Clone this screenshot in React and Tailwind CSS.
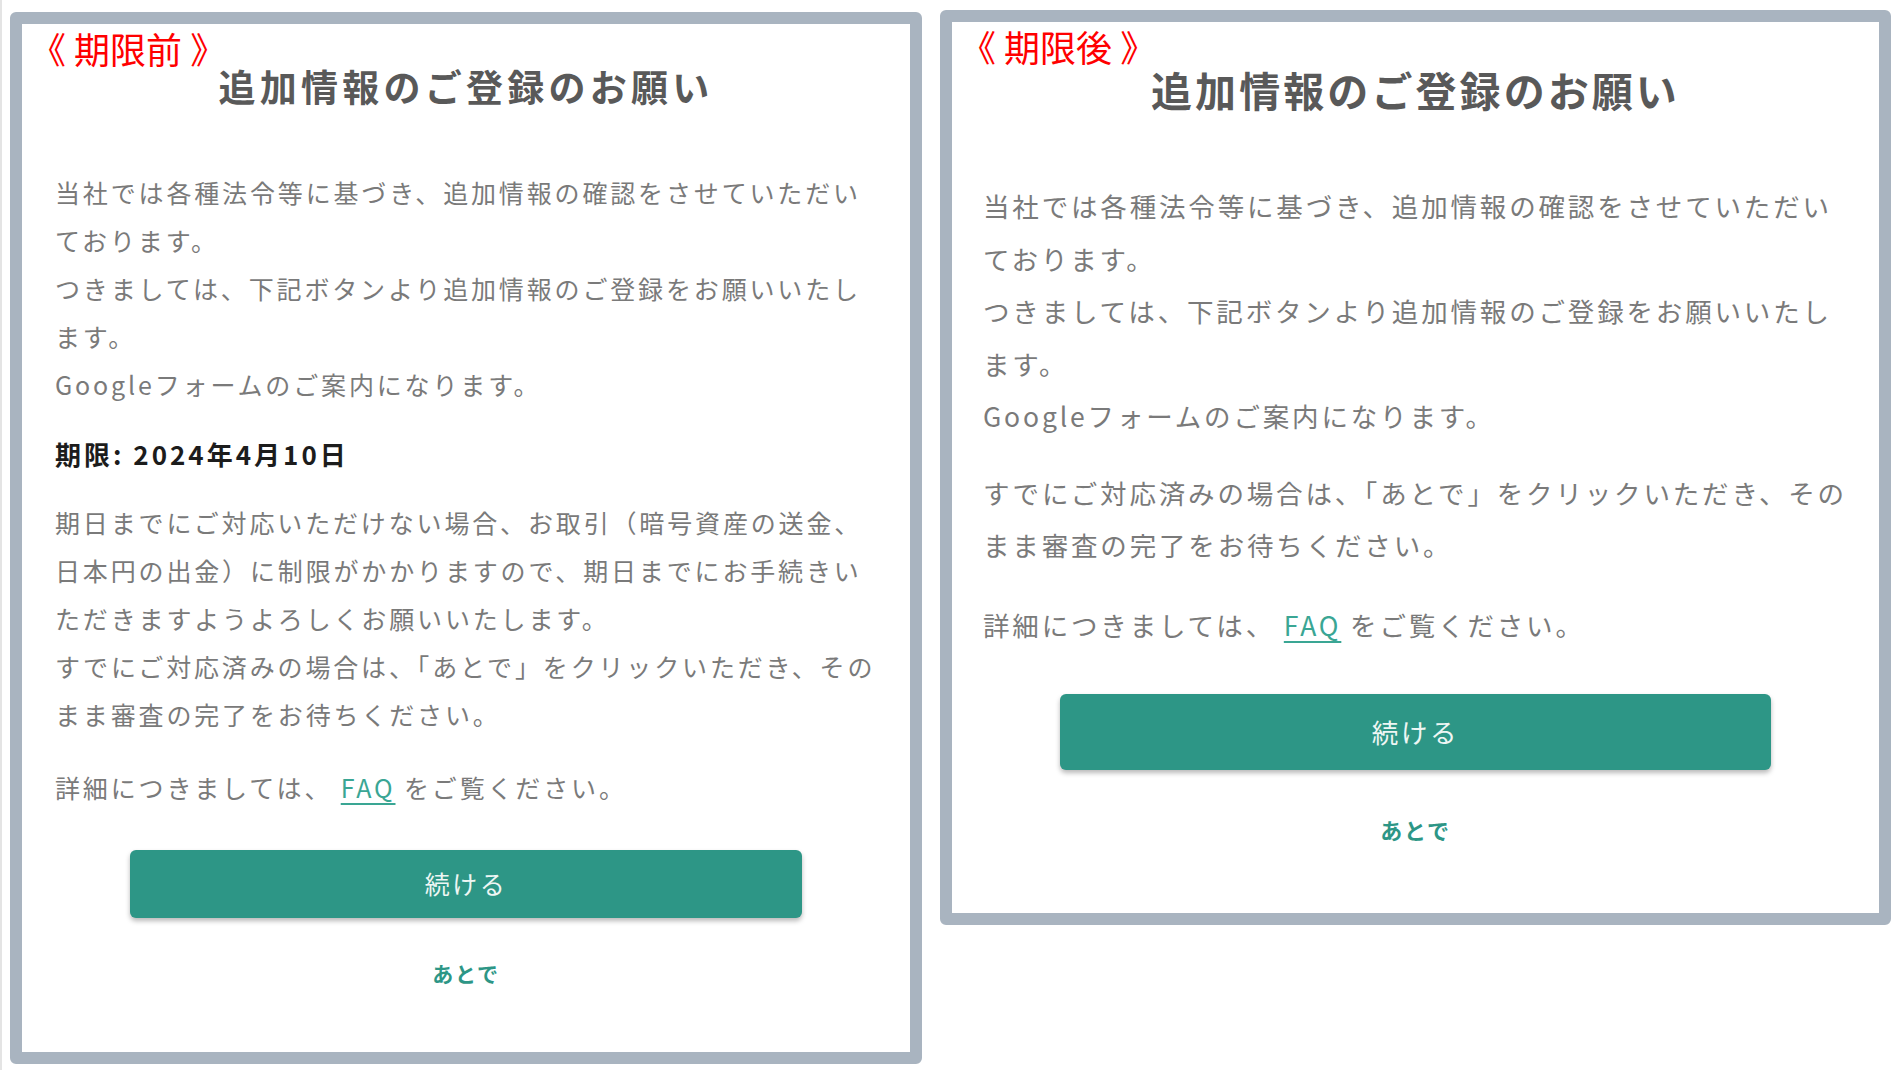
import React from 'react';

const FONT = "font-['Noto_Sans_CJK_JP','Noto_Sans',sans-serif]";

// size presets for the two cards (the right one is drawn a little larger)
const SIZES = {
  before: {
    card: 'w-[912px] h-[1052px] mt-[2px]',
    inner: 'pt-[38px] px-[33px]',
    label: 'left-[8px] top-[3px]',
    title: 'text-[37px] leading-[48px] tracking-[0.115em]',
    body: 'text-[25px] leading-[48px] tracking-[0.114em]',
    titleGap: 'mt-[58px]',
    button: 'w-[672px] h-[68px] text-[25px] tracking-[0.1em]',
    buttonGap: 'mt-[39px]',
    later: 'mt-[39px] text-[21px] leading-[32px]',
  },
  after: {
    card: 'w-[951px] h-[915px]',
    inner: 'pt-[41px] px-[31px]',
    label: 'left-[8px] top-[3px]',
    title: 'text-[41px] leading-[52px] tracking-[0.075em]',
    body: 'text-[26.5px] leading-[52.5px] tracking-[0.107em]',
    titleGap: 'mt-[65px]',
    button: 'w-[711px] h-[76px] text-[26.5px] tracking-[0.1em]',
    buttonGap: 'mt-[43px]',
    later: 'mt-[43px] text-[22px] leading-[32px]',
  },
};

const Lines = ({ lines, className = '' }) => (
  <p className={`whitespace-nowrap ${className}`}>
    {lines.map((line, i) => (
      <React.Fragment key={i}>
        {line}
        {i < lines.length - 1 && <br />}
      </React.Fragment>
    ))}
  </p>
);

const Notice = ({ label, size, children }) => {
  const s = SIZES[size];
  return (
    <div className={`${s.card} shrink-0 rounded-[6px] border-[12px] border-[#a9b4c0] bg-white`}>
      <div className={`relative h-full flex flex-col ${s.inner}`}>
        <span className={`absolute ${s.label} text-[36px] leading-[42px] text-[#ff0000] whitespace-pre`}>
          《 {label} 》
        </span>
        <h1 className={`text-center font-bold text-[#595959] ${s.title}`}>
          追加情報のご登録のお願い
        </h1>
        <div className={`${s.titleGap} ${s.body} text-[#7a7a7a]`}>{children}</div>
        <div className={`flex flex-col items-center ${s.buttonGap}`}>
          <button className={`${s.button} rounded-[6px] bg-[#2d9686] text-[#eef6f4] shadow-[0_3px_5px_rgba(0,0,0,0.28)]`}>
            続ける
          </button>
          <button className={`${s.later} font-bold tracking-[0.08em] text-[#2d9686]`}>あとで</button>
        </div>
      </div>
    </div>
  );
};

const FaqLine = ({ className }) => (
  <p className={`whitespace-nowrap ${className}`}>
    詳細につきましては、{' '}
    <a href="#" className="text-[#3aa694] underline decoration-[1.5px] underline-offset-[5px]">FAQ</a>
    {' '}をご覧ください。
  </p>
);

const intro = [
  '当社では各種法令等に基づき、追加情報の確認をさせていただい',
  'ております。',
  'つきましては、下記ボタンより追加情報のご登録をお願いいたし',
  'ます。',
  'Googleフォームのご案内になります。',
];

const done = [
  'すでにご対応済みの場合は、「あとで」をクリックいただき、その',
  'まま審査の完了をお待ちください。',
];

export default function App() {
  return (
    <div className={`${FONT} min-h-[1070px] bg-white border-l-[2px] border-[#e4e4e4] flex items-start gap-[18px] pl-[8px] pt-[10px]`}>
      <Notice label="期限前" size="before">
        <Lines lines={intro} />
        <p className="mt-[22px] text-[26px] font-bold tracking-[3px] text-[#1c1c1c]">期限: 2024年4月10日</p>
        <Lines
          className="mt-[20px]"
          lines={[
            '期日までにご対応いただけない場合、お取引（暗号資産の送金、',
            '日本円の出金）に制限がかかりますので、期日までにお手続きい',
            'ただきますようよろしくお願いいたします。',
            ...done,
          ]}
        />
        <FaqLine className="mt-[25px]" />
      </Notice>

      <Notice label="期限後" size="after">
        <Lines lines={intro} />
        <Lines className="mt-[24px]" lines={done} />
        <FaqLine className="mt-[27px]" />
      </Notice>
    </div>
  );
}
